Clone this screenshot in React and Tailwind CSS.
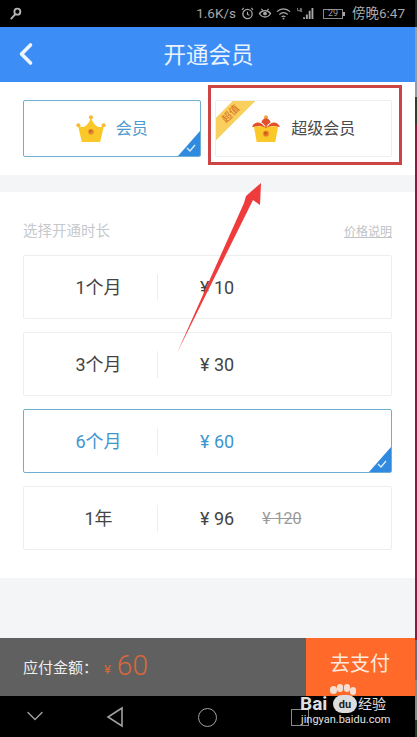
import { ChevronDown, ChevronLeft } from 'lucide-react';

const FONT = "font-['Roboto','Noto_Sans_CJK_SC',sans-serif]";

const PLANS = [
    { id: 1, label: '1个月', price: '10' },
    { id: 3, label: '3个月', price: '30' },
    { id: 6, label: '6个月', price: '60', active: true },
    { id: 12, label: '1年', price: '96', oldPrice: '120' },
];

function Corner() {
    return (
        <svg viewBox="0 0 22 25" className="absolute right-0 bottom-0 w-[22px] h-[25px]">
            <path d="M22 0V25H0Z" fill="#2f8ae0" />
            <path d="M9 17l3 3 5-6" fill="none" stroke="#dcecfa" strokeWidth="1.4" />
        </svg>
    );
}

function Crown({ isSuper }) {
    if (isSuper) {
        return (
            <svg viewBox="0 0 32 30" className="w-[30px] h-[28px]">
                <circle cx="16" cy="2.5" r="2.2" fill="#f0a63a" />
                <path d="M3 12H29L26 29H6Z" fill="#fbc829" />
                <path d="M1 13C3 7 10 6 14 12L16 13L18 12C22 6 29 7 31 13C26 11.5 21 11 16 14C11 11 6 11.5 1 13Z" fill="#e2502c" />
                <path d="M11 8C12 5 14 3.5 16 3.5C18 3.5 20 5 21 8C19 9 17 11 16 13C15 11 13 9 11 8Z" fill="#e2502c" />
                <circle cx="16" cy="20" r="3" fill="#e5762a" />
                <circle cx="15.5" cy="19.5" r="1.2" fill="#c8451f" />
            </svg>
        );
    }
    return (
        <svg viewBox="0 0 32 30" className="w-[30px] h-[28px]">
            <circle cx="16" cy="2.5" r="2.2" fill="#f6b93a" />
            <circle cx="2.5" cy="11" r="2.2" fill="#f6b93a" />
            <circle cx="29.5" cy="11" r="2.2" fill="#f6b93a" />
            <path d="M2 11C7 15 12 13 16 3C20 13 25 15 30 11L26 28Q26 29 25 29H7Q6 29 6 28Z" fill="#fbc829" />
            <circle cx="16" cy="18" r="3" fill="#e5862a" />
            <circle cx="15.5" cy="17.5" r="1.2" fill="#c8551f" />
        </svg>
    );
}

function MemberCard({ label, active, isSuper }) {
    return (
        <div className={`relative flex-1 h-[57px] rounded-[2px] bg-white flex items-center justify-center overflow-hidden ${active ? 'border-[1.5px] border-[#6faed3]' : 'border border-[#eceef0]'}`}>
            {isSuper && (
                <div className="absolute left-[-25px] top-[5px] w-[80px] h-[16px] -rotate-45 bg-[#f9cf5d] flex items-center justify-center text-[10px] leading-none text-[#d96a1a]">
                    超值
                </div>
            )}
            <div className="flex items-center gap-[10px]">
                <Crown isSuper={isSuper} />
                <span className={isSuper ? 'text-[16px] text-[#4a4a4a]' : 'text-[16px] text-[#4e9bd0]'}>{label}</span>
            </div>
            {active && <Corner />}
        </div>
    );
}

function PlanRow({ plan }) {
    const tone = plan.active ? 'text-[#3f96cf]' : 'text-[#444444]';
    return (
        <div className={`relative h-[64px] rounded-[2px] bg-white flex items-center overflow-hidden ${plan.active ? 'border-[1.5px] border-[#6faed3]' : 'border border-[#eceef0]'}`}>
            <div className={`w-[133px] pl-[16px] pt-[1px] text-center text-[18px] ${tone}`}>{plan.label}</div>
            <div className="w-px h-[27px] bg-[#eceef0]" />
            <div className={`ml-[42px] pt-[1px] text-[18px] ${tone}`}>¥ {plan.price}</div>
            {plan.oldPrice && <div className="ml-[28px] pt-[1px] text-[16px] text-[#9a9a9a] line-through">¥ {plan.oldPrice}</div>}
            {plan.active && <Corner />}
        </div>
    );
}

export default function App() {
    return (
        <div className={`relative w-[417px] h-[737px] overflow-hidden bg-white ${FONT}`}>
            {/* barra de status */}
            <div className="h-[27px] bg-black flex items-center justify-between pl-[9px] pr-[12px] text-[13.5px] text-[#a8a8a8]">
                <svg viewBox="0 0 14 14" className="w-[13px] h-[13px]">
                    <circle cx="9" cy="5" r="3.2" fill="none" stroke="#b5b5b5" strokeWidth="2" />
                    <path d="M7 7.5L2 13" stroke="#b5b5b5" strokeWidth="2" />
                </svg>
                <div className="flex items-center gap-[4px] whitespace-nowrap">
                    <span className="mr-[1px]">1.6K/s</span>
                    <svg viewBox="0 0 14 14" className="w-[13px] h-[13px]">
                        <circle cx="7" cy="7.5" r="5" fill="none" stroke="#a8a8a8" strokeWidth="1.4" />
                        <path d="M7 5v3l2 1M1 3l2-2M13 3l-2-2" fill="none" stroke="#a8a8a8" strokeWidth="1.2" />
                    </svg>
                    <svg viewBox="0 0 14 14" className="w-[14px] h-[13px]">
                        <path d="M1 7c3-4 9-4 12 0-3 5-9 5-12 0Z" fill="none" stroke="#a8a8a8" strokeWidth="1.4" />
                        <circle cx="7" cy="7" r="2" fill="#a8a8a8" />
                        <path d="M3 2l2 2M11 2L9 4" stroke="#a8a8a8" strokeWidth="1.2" />
                    </svg>
                    <svg viewBox="0 0 16 14" className="w-[15px] h-[13px]">
                        <path d="M1 5c4-4 10-4 14 0M3.5 8c3-2.5 6-2.5 9 0M6 10.5c1.5-1 2.5-1 4 0" fill="none" stroke="#a8a8a8" strokeWidth="1.3" />
                        <circle cx="8" cy="12.5" r="1" fill="#a8a8a8" />
                    </svg>
                    <svg viewBox="0 0 20 14" className="w-[20px] h-[13px]">
                        <path d="M8 13h2v-2H8ZM11 13h2V8h-2ZM14 13h2V4h-2ZM17 13h2V1h-2Z" fill="#a8a8a8" />
                        <path d="M2 1v3h3M5 1v4M7 2H6v3h1" fill="none" stroke="#a8a8a8" strokeWidth="0.8" />
                    </svg>
                    <div className="ml-[4px] flex items-center">
                        <div className="w-[20px] h-[10px] border border-[#8a8a8a] flex items-center justify-center text-[9px] leading-none text-[#9a9a9a]">29</div>
                        <div className="w-[2px] h-[4px] bg-[#a8a8a8]" />
                    </div>
                    <span className="ml-[3px]">傍晚6:47</span>
                </div>
            </div>

            {/* cabeçalho */}
            <header className="relative h-[55px] bg-[#3c8ef6] flex items-center justify-center text-white">
                <ChevronLeft className="absolute left-[8px] top-[9px] w-[36px] h-[36px] text-[#eef5ff]" strokeWidth={2.4} />
                <h1 className="text-[22.5px] pt-[2px] font-normal text-[#eaf3ff]">开通会员</h1>
            </header>

            {/* tipos de membro */}
            <div className="h-[93px] flex gap-[14px] pt-[18px] px-[23px] pr-[25px]">
                <MemberCard label="会员" active />
                <MemberCard label="超级会员" isSuper />
            </div>
            <div className="h-[17px] bg-[#f3f5f7]" />

            {/* duração */}
            <section className="h-[386px] px-[23px] pr-[25px] pt-[31px]">
                <div className="h-[18px] mb-[14px] flex items-center justify-between">
                    <span className="text-[14.5px] text-[#c6c9cc]">选择开通时长</span>
                    <span className="text-[12px] text-[#c0c3c6] underline">价格说明</span>
                </div>
                <div className="flex flex-col gap-[13px]">
                    {PLANS.map((plan) => <PlanRow key={plan.id} plan={plan} />)}
                </div>
            </section>
            <div className="h-[60px] bg-[#f4f5f7]" />

            {/* rodapé de pagamento */}
            <div className="h-[58px] bg-[#606060] flex items-stretch">
                <div className="flex-1 flex items-center pl-[23px] text-[15px] text-[#eeeeee]">
                    <span className="pt-[3px]">应付金额：</span>
                    <span className="ml-[6px] text-[13px] text-[#d9673a] pt-[6px]">¥</span>
                    <span className="ml-[6px] text-[28px] leading-none font-light text-[#d9673a] mb-[3px]">60</span>
                </div>
                <div className="w-[111px] bg-[#ff6a2b] flex items-center justify-center text-[20px] text-[#fbe9dc] pr-[3px] pb-[6px]">去支付</div>
            </div>

            {/* navegação */}
            <div className="relative h-[41px] bg-black">
                <ChevronDown className="absolute left-[21px] top-[6px] w-[28px] h-[28px] text-[#a0a0a0]" strokeWidth={1.2} />
                <svg viewBox="0 0 18 22" className="absolute left-[106px] top-[10px] w-[18px] h-[22px]">
                    <path d="M16 2L2 11l14 9Z" fill="none" stroke="#a0a0a0" strokeWidth="1.6" />
                </svg>
                <div className="absolute left-[198px] top-[12px] w-[19px] h-[19px] rounded-full border-[1.5px] border-[#a0a0a0]" />
                <div className="absolute left-[291px] top-[13px] w-[18px] h-[17px] border-[1.5px] border-[#8a8a8a]" />
            </div>

            {/* marcações por cima da captura */}
            <div className="absolute left-[208px] top-[85px] w-[194px] h-[80px] border-[3px] border-[#cc4444]" />
            <svg viewBox="0 0 417 737" className="absolute inset-0 w-[417px] h-[737px] pointer-events-none">
                <path d="M177 353L244 203L246 196L261 183L260 205L253 200Z" fill="#ef3b3b" />
            </svg>

            {/* marca d'água */}
            <div className="absolute left-[300px] top-[684px] w-[90px] h-[44px] text-[#e0e0e0]">
                <div className="absolute left-[30px] top-[2px] w-[7px] h-[8px] rounded-full bg-[#f5ded0]" />
                <div className="absolute left-[37px] top-[0px] w-[6px] h-[8px] rounded-full bg-[#f5ded0]" />
                <div className="absolute left-[44px] top-[0px] w-[6px] h-[8px] rounded-full bg-[#f5ded0]" />
                <div className="absolute left-[50px] top-[3px] w-[6px] h-[8px] rounded-full bg-[#f5ded0]" />
                <div className="absolute left-[0px] top-[11px] text-[19px] font-bold leading-[18px]">Bai</div>
                <div className="absolute left-[33px] top-[11px] w-[24px] h-[18px] rounded-full bg-[#dddddd] flex items-center justify-center text-[11px] leading-none font-bold text-[#222222]">du</div>
                <div className="absolute left-[58px] top-[12px] text-[14px] leading-[17px]">经验</div>
                <div className="absolute left-[1px] top-[30px] text-[11px] leading-[12px] whitespace-nowrap">jingyan.baidu.com</div>
            </div>

            {/* sobra da captura na borda direita */}
            <div className="absolute right-0 top-0 w-[2px] h-[737px] flex flex-col">
                <div className="h-[27px] bg-[#222222]" />
                <div className="h-[70px] bg-[#9a9aa5]" />
                <div className="h-[28px] bg-[#3a3a32]" />
                <div className="h-[515px] bg-[#8a1a44]" />
                <div className="h-[40px] bg-[#6a6a80]" />
                <div className="h-[40px] bg-[#888888]" />
                <div className="h-[17px] bg-[#2a3a2a]" />
            </div>
        </div>
    );
}
